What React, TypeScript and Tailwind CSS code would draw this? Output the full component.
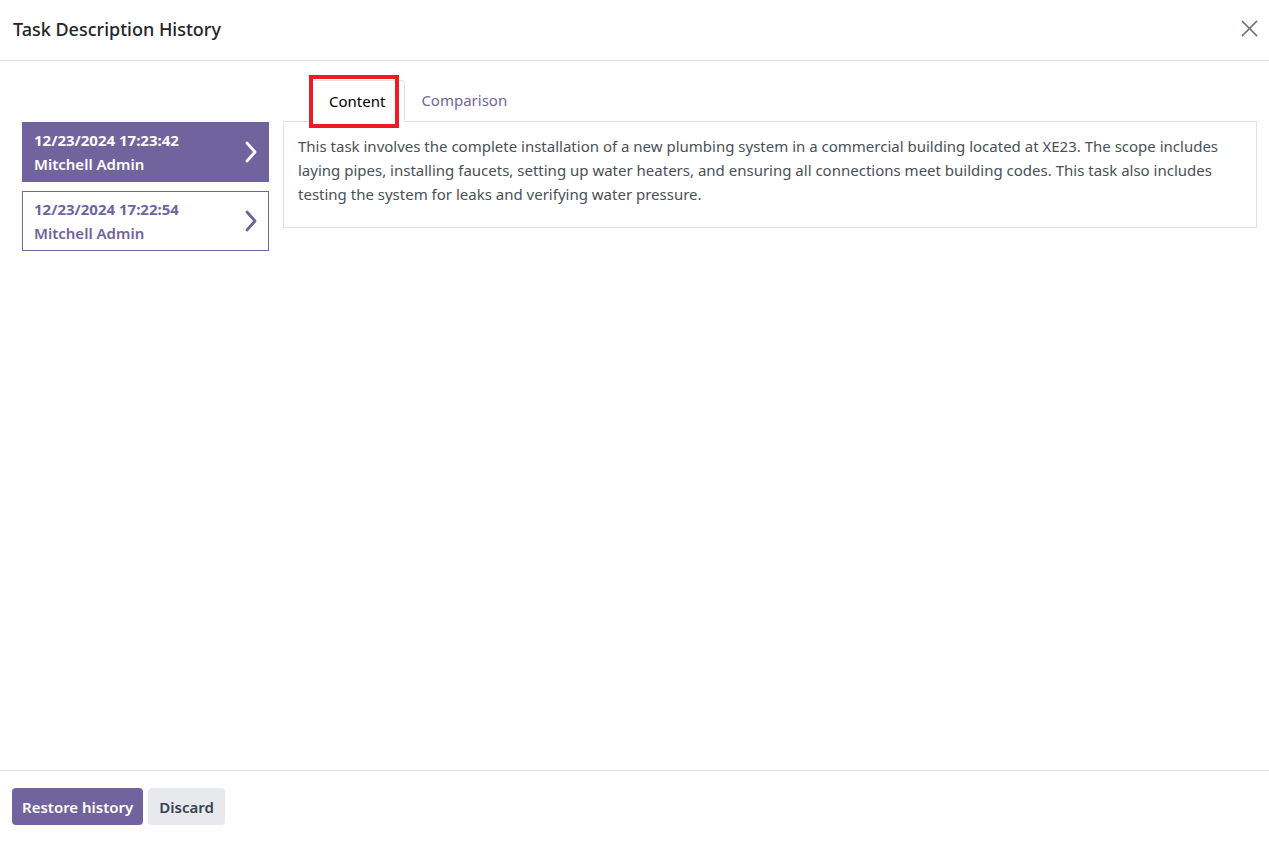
import React from "react";

const purple = "#71639e";

function Chevron({ className }: { className: string }) {
  return (
    <svg viewBox="0 0 16 24" className={className} fill="none" stroke="currentColor" strokeWidth={2.8} strokeLinecap="round" strokeLinejoin="round">
      <path d="M4 3l8 9-8 9" />
    </svg>
  );
}

export default function App() {
  const entries = [
    { date: "12/23/2024 17:23:42", user: "Mitchell Admin", active: true },
    { date: "12/23/2024 17:22:54", user: "Mitchell Admin", active: false },
  ];

  return (
    <div className="flex h-[843px] flex-col bg-white text-[15px] leading-[24px] text-[#212529]" style={{ fontFamily: '"Noto Sans", "Open Sans", sans-serif' }}>
      {/* header */}
      <div className="flex h-[61px] shrink-0 items-center justify-between border-b border-[#dee2e6] pb-[3px] pl-[13px] pr-[10px]">
        <h4 className="text-[18px] font-medium text-[#212529]">Task Description History</h4>
        <button className="text-[#6c757d]">
          <svg viewBox="0 0 20 20" className="h-[19px] w-[19px]" stroke="currentColor" strokeWidth={1.6}>
            <path d="M2 2l16 16M18 2L2 18" />
          </svg>
        </button>
      </div>

      {/* body */}
      <div className="flex flex-1 pl-[22px] pr-[12px]">
        <div className="mt-[61px] flex w-[247px] shrink-0 flex-col gap-[9px]">
          {entries.map((e) => (
            <div
              key={e.date}
              className={
                e.active
                  ? "flex h-[60px] items-center justify-between bg-[#71639e] pl-[12px] pr-[10px] text-white"
                  : "flex h-[60px] items-center justify-between border border-[#71639e] pl-[11px] pr-[9px] text-[#71639e]"
              }
            >
              <div className="font-bold">
                <div>{e.date}</div>
                <div className="font-semibold">{e.user}</div>
              </div>
              <Chevron className="h-[24px] w-[16px]" />
            </div>
          ))}
        </div>

        <div className="ml-[14px] flex flex-1 flex-col pt-[19px]">
          <div className="relative flex pl-[26px]">
            <div className="relative -mb-px rounded-t-[4px] border border-b-white border-[#dee2e6] bg-white px-[19px] py-[8px] text-[#000]">
              Content
              <span className="pointer-events-none absolute -left-[1px] -top-[6px] h-[53px] w-[90px] border-[4px] border-[#ec1c24]" />
            </div>
            <div className="px-[16px] py-[8px]" style={{ color: purple }}>Comparison</div>
          </div>
          <div className="h-[107px] border border-[#dee2e6] px-[14px] pt-[12px] text-[#495057]">
            This task involves the complete installation of a new plumbing system in a commercial building located at XE23. The scope includes laying pipes, installing faucets, setting up water heaters, and ensuring all connections meet building codes. This task also includes testing the system for leaks and verifying water pressure.
          </div>
        </div>
      </div>

      {/* footer */}
      <div className="flex h-[73px] shrink-0 items-start gap-[5px] border-t border-[#dee2e6] pl-[12px] pt-[17px]">
        <button className="h-[37px] rounded-[4px] bg-[#71639e] px-[10px] font-semibold text-white">Restore history</button>
        <button className="h-[37px] rounded-[4px] bg-[#e7e9ed] px-[11px] font-semibold text-[#374151]">Discard</button>
      </div>
    </div>
  );
}
